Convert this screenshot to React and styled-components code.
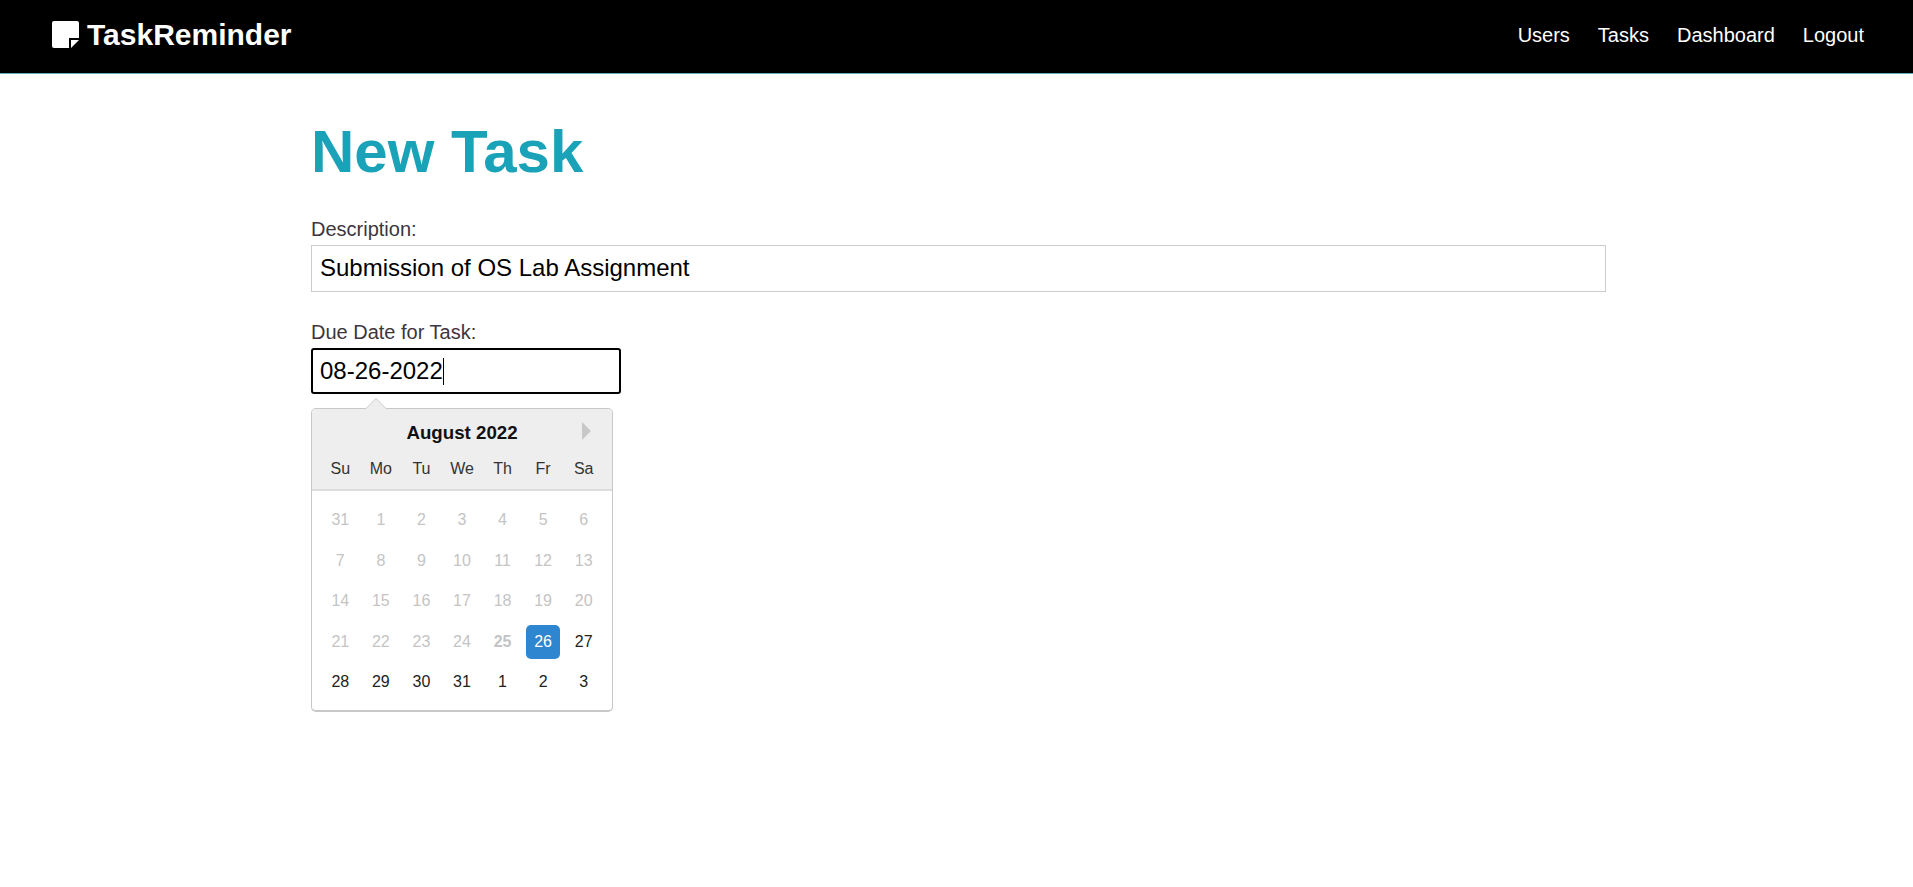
import React from 'react'
import styled, { createGlobalStyle } from 'styled-components'

const GlobalStyle = createGlobalStyle`
  html, body { margin: 0; padding: 0; background: #fff; }
  body { font-family: "Liberation Sans", Arial, sans-serif; color: #333; }
`

const NavBar = styled.nav`
  box-sizing: border-box;
  height: 74px;
  background: #000;
  border-bottom: 1px solid #5fb3b8;
  display: flex;
  align-items: center;
  justify-content: space-between;
  padding: 0 49px 3px 52px;
`
const Brand = styled.a`
  display: flex;
  align-items: center;
  gap: 8px;
  color: #fff;
  font-size: 30px;
  font-weight: 700;
`
const BrandIcon = styled.svg`
  width: 27px;
  height: 27px;
  margin-bottom: 2px;
`
const NavLinks = styled.div`
  display: flex;
  gap: 28px;
  padding-top: 1px;
`
const NavLink = styled.a`
  color: #fff;
  font-size: 20px;
`
const Main = styled.main`
  width: 1295px;
  margin-left: 311px;
`
const Title = styled.h1`
  margin: 0;
  padding-top: 43px;
  font-size: 60px;
  line-height: 69px;
  font-weight: 700;
  color: #1aa3b8;
`
const Field = styled.div`
  margin-top: ${p => p.$top}px;
`
const Label = styled.label`
  display: block;
  font-size: 20px;
  line-height: 31px;
  color: #3d3540;
`
const TextInput = styled.input`
  display: block;
  box-sizing: border-box;
  width: 100%;
  height: 47px;
  padding: 0 8px 2px;
  border: 1px solid #ccc;
  outline: none;
  font: 24px "Liberation Sans", Arial, sans-serif;
  color: #000;
`
const FocusedInput = styled.div`
  box-sizing: border-box;
  width: 310px;
  height: 46px;
  display: flex;
  align-items: center;
  padding: 0 7px;
  border: 2px solid #000;
  border-radius: 3px;
  font-size: 24px;
  color: #000;
`
const Caret = styled.span`
  width: 1px;
  height: 27px;
  background: #000;
`
const Calendar = styled.div`
  position: relative;
  box-sizing: border-box;
  width: 302px;
  height: 304px;
  margin-top: 14px;
  border: 1px solid #c8c8c8;
  border-bottom-width: 2px;
  border-radius: 5px;
  background: #fff;
  color: #222;

  &::before, &::after {
    content: "";
    position: absolute;
    left: 53px;
    width: 0;
    height: 0;
    border-left: 11px solid transparent;
    border-right: 11px solid transparent;
  }
  &::before { top: -11px; border-bottom: 11px solid #ccc; }
  &::after { top: -10px; border-bottom: 11px solid #eee; }
`
const CalHead = styled.div`
  box-sizing: border-box;
  height: 82px;
  background: #eee;
  border-bottom: 2px solid #dcdcdc;
  border-radius: 4px 4px 0 0;
`
const MonthRow = styled.div`
  position: relative;
  box-sizing: border-box;
  height: 47px;
  padding-top: 1px;
  display: flex;
  align-items: center;
  justify-content: center;
  font-size: 18.7px;
  font-weight: 700;
  color: #111;
`
const NextArrow = styled.span`
  position: absolute;
  left: 270px;
  top: 13px;
  width: 0;
  height: 0;
  border-top: 9px solid transparent;
  border-bottom: 9px solid transparent;
  border-left: 9px solid #c8c8c8;
`
const WeekRow = styled.div`
  display: grid;
  grid-template-columns: repeat(7, 1fr);
  padding: 0 8px;
  font-size: 16px;
  line-height: 26px;
  text-align: center;
  color: #333;
`
const DayGrid = styled.div`
  display: grid;
  grid-template-columns: repeat(7, 1fr);
  grid-auto-rows: 40.5px;
  padding: 9px 8px 0;
  font-size: 16px;
`
const Day = styled.span`
  justify-self: center;
  align-self: center;
  width: 34px;
  height: 34px;
  display: flex;
  align-items: center;
  justify-content: center;
  border-radius: 5px;
  color: ${p => (p.$on ? '#fff' : p.$off ? '#c4c4c4' : '#222')};
  background: ${p => (p.$on ? '#2e86d0' : 'transparent')};
  font-weight: ${p => (p.$bold ? 700 : 400)};
`

const weekDays = ['Su', 'Mo', 'Tu', 'We', 'Th', 'Fr', 'Sa']
const days = [31, ...Array.from({ length: 31 }, (_, i) => i + 1), 1, 2, 3]

const NoteIcon = () => (
  <BrandIcon viewBox="0 0 27 27">
    <path fill="#fff" d="M2 0h23a2 2 0 0 1 2 2v23a2 2 0 0 1-2 2H2a2 2 0 0 1-2-2V2a2 2 0 0 1 2-2z" />
    <path fill="#000" d="M17 17h10v10H17z" />
    <path fill="#fff" d="M19 19h8l-8 8z" />
  </BrandIcon>
)

export default function App() {
  return (
    <>
      <GlobalStyle />
      <NavBar>
        <Brand><NoteIcon />TaskReminder</Brand>
        <NavLinks>
          <NavLink>Users</NavLink>
          <NavLink>Tasks</NavLink>
          <NavLink>Dashboard</NavLink>
          <NavLink>Logout</NavLink>
        </NavLinks>
      </NavBar>
      <Main>
        <Title>New Task</Title>
        <Field $top={28}>
          <Label>Description:</Label>
          <TextInput defaultValue="Submission of OS Lab Assignment" />
        </Field>
        <Field $top={25}>
          <Label>Due Date for Task:</Label>
          <FocusedInput>08-26-2022<Caret /></FocusedInput>
          <Calendar>
            <CalHead>
              <MonthRow>August 2022<NextArrow /></MonthRow>
              <WeekRow>{weekDays.map(d => <span key={d}>{d}</span>)}</WeekRow>
            </CalHead>
            <DayGrid>
              {days.map((d, i) => (
                <Day key={i} $off={i < 26} $bold={i === 25} $on={i === 26}>{d}</Day>
              ))}
            </DayGrid>
          </Calendar>
        </Field>
      </Main>
    </>
  )
}
